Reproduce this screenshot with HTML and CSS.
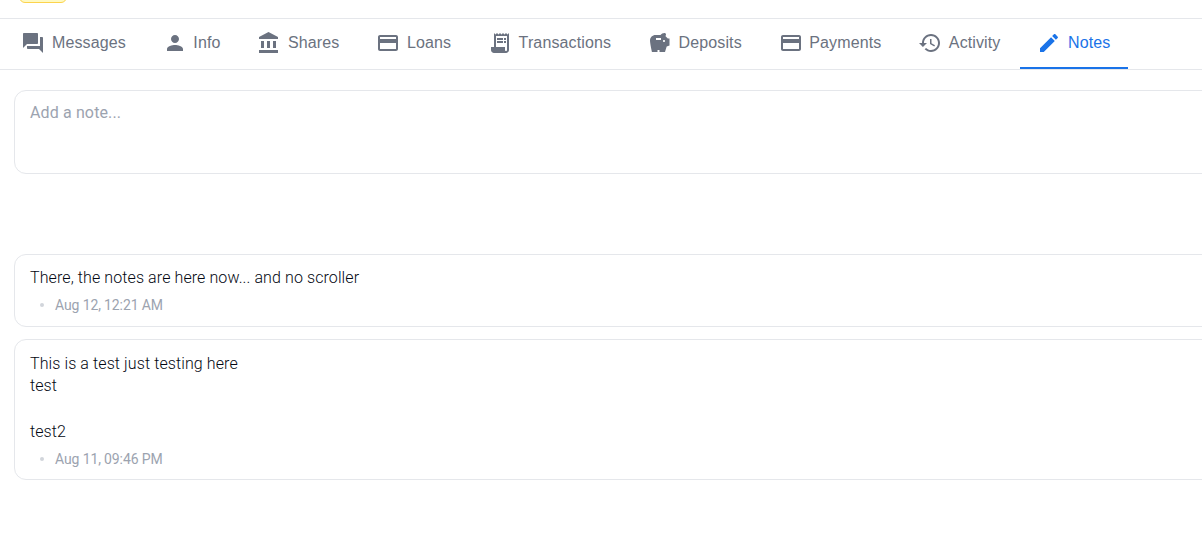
FILE: index.html
```html
<!DOCTYPE html>
<html lang="en">
<head>
<meta charset="utf-8">
<title>Notes</title>
<link rel="stylesheet" href="styles.css">
</head>
<body>
<header class="top"><span class="badge"></span></header>
<nav class="tabs">
  <a class="tab"><svg class="icon" viewBox="0 0 24 24"><path d="M21 6h-2v9H6v2c0 .55.45 1 1 1h11l4 4V7c0-.55-.45-1-1-1zm-4 6V3c0-.55-.45-1-1-1H3c-.55 0-1 .45-1 1v14l4-4h10c.55 0 1-.45 1-1z"/></svg>Messages</a>
  <a class="tab"><svg class="icon" viewBox="0 0 24 24"><path d="M12 12c2.21 0 4-1.79 4-4s-1.79-4-4-4-4 1.79-4 4 1.79 4 4 4zm0 2c-2.67 0-8 1.34-8 4v2h16v-2c0-2.66-5.33-4-8-4z"/></svg>Info</a>
  <a class="tab"><svg class="icon" viewBox="0 0 24 24"><path d="M4 10v7h3v-7H4zm6 0v7h3v-7h-3zM2 22h19v-3H2v3zm14-12v7h3v-7h-3zm-4.500-9L2 6v2h19V6l-9.500-5z"/></svg>Shares</a>
  <a class="tab"><svg class="icon" viewBox="0 0 24 24"><path d="M20 4H4c-1.110 0-1.990.890-1.990 2L2 18c0 1.110.890 2 2 2h16c1.110 0 2-.890 2-2V6c0-1.110-.890-2-2-2zm0 14H4v-6h16v6zm0-10H4V6h16v2z"/></svg>Loans</a>
  <a class="tab"><svg class="icon" viewBox="0 0 24 24"><path d="M19.500 3.500L18 2l-1.500 1.500L15 2l-1.500 1.500L12 2l-1.500 1.500L9 2 7.500 3.500 6 2v14H3v3c0 1.660 1.340 3 3 3h12c1.660 0 3-1.340 3-3V2l-1.500 1.500zM19 19c0 .550-.450 1-1 1s-1-.450-1-1v-3H8V5h11v14z"/><path d="M9 7h6v2H9zm7 0h2v2h-2zM9 10h6v2H9zm7 0h2v2h-2z"/></svg>Transactions</a>
  <a class="tab"><svg class="icon" viewBox="0 0 24 24"><path d="M19.830 7.500l-2.270-2.270c.070-.420.180-.810.320-1.150.080-.180.120-.370.120-.580 0-.830-.670-1.500-1.500-1.500-1.640 0-3.090.790-4 2h-5C4.460 4 2 6.460 2 9.500S4 21 4 21h5.500v-2h2v2H17l1.680-5.590 2.820-.940V7.500h-1.670zM13 9H8V7h5v2zm3 2c-.550 0-1-.450-1-1s.450-1 1-1 1 .450 1 1-.450 1-1 1z"/></svg>Deposits</a>
  <a class="tab"><svg class="icon" viewBox="0 0 24 24"><path d="M20 4H4c-1.110 0-1.990.890-1.990 2L2 18c0 1.110.890 2 2 2h16c1.110 0 2-.890 2-2V6c0-1.110-.890-2-2-2zm0 14H4v-6h16v6zm0-10H4V6h16v2z"/></svg>Payments</a>
  <a class="tab"><svg class="icon" viewBox="0 0 24 24"><path d="M13 3c-4.970 0-9 4.030-9 9H1l3.890 3.890.070.140L9 12H6c0-3.870 3.130-7 7-7s7 3.130 7 7-3.130 7-7 7c-1.930 0-3.680-.790-4.940-2.060l-1.420 1.420C8.270 19.990 10.510 21 13 21c4.970 0 9-4.030 9-9s-4.030-9-9-9zm-1 5v5l4.280 2.540.720-1.210-3.500-2.080V8H12z"/></svg>Activity</a>
  <a class="tab active"><svg class="icon" viewBox="0 0 24 24"><path d="M3 17.250V21h3.750L17.810 9.940l-3.750-3.750L3 17.250zM20.710 7.040c.390-.390.390-1.020 0-1.410l-2.340-2.340c-.390-.390-1.020-.390-1.410 0l-1.830 1.830 3.750 3.750 1.830-1.830z"/></svg>Notes</a>
</nav>
<main class="content">
  <textarea class="composer" placeholder="Add a note..."></textarea>
  <section class="notes">
    <article class="note">
      <p class="note-text">There, the notes are here now... and no scroller</p>
      <div class="meta"><span class="dot"></span>Aug 12, 12:21 AM</div>
    </article>
    <article class="note">
      <p class="note-text">This is a test just testing here<br>test<br><br>test2</p>
      <div class="meta"><span class="dot"></span>Aug 11, 09:46 PM</div>
    </article>
  </section>
</main>
</body>
</html>
```
FILE: styles.css
```css
* { box-sizing: border-box; }
html, body { margin: 0; height: 100%; overflow: hidden; background: #fff; }
body { font-family: Roboto, sans-serif; color: #1f2937; width: 1202px; }

.top { height: 19px; border-bottom: 1px solid #e5e7eb; overflow: hidden; }
.badge { display: block; width: 48px; height: 12px; margin: -9px 0 0 19px; background: #fef9c3; border: 1px solid #fcd34d; border-radius: 10px; }

.tabs { display: flex; height: 51px; padding-left: 4px; border-bottom: 1px solid #e5e7eb; }
.tab { display: flex; align-items: center; gap: 6.700px; height: 50px; padding: 0 18px 0 17.300px; margin-right: 1.500px; font: 16px "Liberation Sans", sans-serif; letter-spacing: .12px; color: #6b7280; border-bottom: 2px solid transparent; }
.tab.active { padding-right: 17.400px; color: #1a73e8; border-bottom-color: #1a73e8; }
.icon { width: 24px; height: 24px; fill: currentColor; flex: none; }

.content { width: 1300px; padding: 20px 0 0 14px; }
.composer { display: block; width: 100%; height: 84px; padding: 11px 15px; border: 1px solid #e5e7eb; border-radius: 12px; font: 16px/22px Roboto, sans-serif; letter-spacing: .13px; resize: none; outline: none; }
.composer::placeholder { color: #9ca3af; opacity: 1; }

.notes { display: flex; flex-direction: column; gap: 12.300px; margin-top: 79.600px; }
.note { padding: 12.850px 15px 10.400px; border: 1px solid #e5e7eb; border-radius: 12px; }
.note-text { margin: 0; font: 300 16px/22.750px Roboto, sans-serif; letter-spacing: .1px; color: #030712; }
.meta { display: flex; align-items: center; margin-top: 5px; padding-left: 10px; font-size: 14px; line-height: 20px; letter-spacing: -.12px; color: #9ca3af; }
.dot { width: 4px; height: 4px; margin-right: 11px; border-radius: 50%; background: #d1d5db; }
```
